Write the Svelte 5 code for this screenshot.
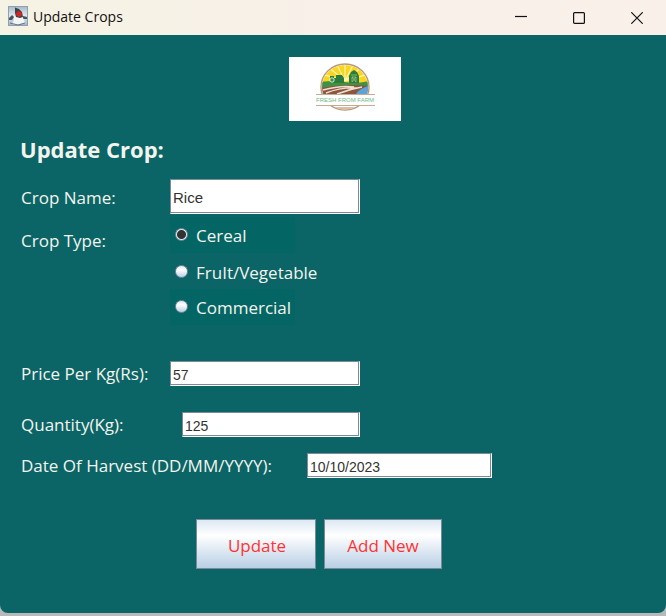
<script>
  let crop = $state({ name: 'Rice', type: 'Cereal', price: '57', quantity: '125', harvest: '10/10/2023' });
  const types = ['Cereal', 'FruIt/Vegetable', 'Commercial'];
</script>

<div class="window">
  <header>
    <svg class="app-icon" width="20" height="20" viewBox="0 0 20 20" aria-hidden="true">
      <defs>
        <linearGradient id="tile" x1="0" y1="0" x2="0" y2="1">
          <stop offset="0" stop-color="#a9b9c8" />
          <stop offset="0.5" stop-color="#e3eaf0" />
          <stop offset="1" stop-color="#9fb3c6" />
        </linearGradient>
      </defs>
      <rect x="0.5" y="0.5" width="19" height="19" fill="url(#tile)" stroke="#8fa0b0" />
      <path d="M1 12 4 9 6 11 4 14 1 14ZM15 10 19 11 19 13 15 13Z" fill="#4a525a" />
      <path d="M6 10 14 10 16 14 17 17 13 18 9 19 4 18 6 14Z" fill="#f3f5f6" />
      <path d="M7 1.5 11 3 14 6 15 11 12 12 8 11 7 7Z" fill="#3d434b" />
      <path d="M2 17 6 18 10 19 17 17" fill="none" stroke="#68747f" />
      <circle cx="11" cy="8" r="2.7" fill="#d92323" />
    </svg>
    <span class="title">Update Crops</span>
    <div class="controls">
      <button type="button" aria-label="Minimize">
        <svg width="12" height="12" viewBox="0 0 12 12"><path d="M0 4.5H12" /></svg>
      </button>
      <button type="button" aria-label="Maximize">
        <svg width="12" height="12" viewBox="0 0 12 12"><rect x="0.6" y="0.6" width="10.8" height="10.8" rx="1" /></svg>
      </button>
      <button type="button" aria-label="Close">
        <svg width="12" height="12" viewBox="0 0 12 12"><path d="M0.3 0.3 11.7 11.7M11.7 0.3 0.3 11.7" /></svg>
      </button>
    </div>
  </header>

  <main>
    <svg class="logo" width="112" height="64" viewBox="0 0 112 64" role="img" aria-label="Fresh from farm">
      <defs>
        <clipPath id="disc"><ellipse cx="56" cy="30" rx="23" ry="22" /></clipPath>
      </defs>
      <rect width="112" height="64" fill="#fff" />
      <ellipse cx="56" cy="30" rx="24" ry="23" fill="#fff" stroke="#b79a7c" stroke-width="1.4" />
      <g clip-path="url(#disc)">
        <rect x="32" y="6" width="48" height="22" fill="#fbd51e" />
        <path d="M56 24V6M56 24 47 6M56 24 65 6M56 24 38 9M56 24 74 9M56 24 33 17M56 24 79 17" stroke="#fff6b5" stroke-width="1.2" />
        <path d="M32 25Q45 23 56 25T80 24V31H32Z" fill="#3f9146" />
        <path d="M32 31Q55 26 80 29V38H32Z" fill="#8a5640" />
        <path d="M34 33Q52 28 65 30M37 36Q52 30 68 31M48 37Q61 32 73 30" fill="none" stroke="#f0dfcf" stroke-width="1.4" />
        <path d="M67 37Q70 32 79 29V37Z" fill="#5aa4dc" />
      </g>
      <path d="M41 26V19H45V21H47V18H53L55 21V26Z" fill="#2b7d3c" />
      <circle cx="43" cy="23" r="2.2" fill="#3f9146" stroke="#fff" stroke-width="0.8" />
      <path d="M60 26V19L62 15 65 13 68 15 70 19V26Z" fill="#2b7d3c" />
      <path d="M62 18H68M63 25V20H67V25M63 20 67 25M67 20 63 25" fill="none" stroke="#a9cc86" stroke-width="0.7" />
      <rect x="27" y="37" width="59" height="12" fill="#fff" />
      <path d="M27 37.5H86M27 48.5H86" stroke="#c7a994" />
      <path d="M46 50Q55 56 66 50" fill="#d9bfa8" />
      <text x="56" y="45" text-anchor="middle">FRESH FROM FARM</text>
    </svg>

    <h1>Update Crop:</h1>

    <form onsubmit={(e) => e.preventDefault()}>
      <div class="row name">
        <label for="name">Crop Name:</label>
        <input id="name" type="text" bind:value={crop.name} />
      </div>

      <div class="row types" role="radiogroup" aria-labelledby="type-label">
        <span id="type-label">Crop Type:</span>
        <div class="options">
          {#each types as type}
            <label><input type="radio" name="type" value={type} bind:group={crop.type} />{type}</label>
          {/each}
        </div>
      </div>

      <div class="row price">
        <label for="price">Price Per Kg(Rs):</label>
        <input id="price" type="text" bind:value={crop.price} />
      </div>
      <div class="row quantity">
        <label for="quantity">Quantity(Kg):</label>
        <input id="quantity" type="text" bind:value={crop.quantity} />
      </div>
      <div class="row harvest">
        <label for="harvest">Date Of Harvest (DD/MM/YYYY):</label>
        <input id="harvest" type="text" bind:value={crop.harvest} />
      </div>

      <div class="actions">
        <button class="update" type="submit">Update</button>
        <button class="add" type="button">Add New</button>
      </div>
    </form>
  </main>
</div>

<style>
  :global(body) {
    background: #b8baba;
  }

  .window {
    box-sizing: border-box;
    min-height: calc(100vh - 3px);
    overflow: hidden;
    border-radius: 0 0 8px 8px;
    background: #0b6566;
    color: #f4f4ee;
    font: 17px/24px 'Open Sans', 'Noto Sans', sans-serif;
  }

  header {
    display: flex;
    align-items: center;
    height: 35px;
    padding-left: 8px;
    background: linear-gradient(90deg, #f5f3e3, #f8f0e9 50%);
    color: #111;
  }

  .app-icon {
    margin-bottom: 4px;
  }

  .title {
    margin: 0 auto 2px 5px;
    font-size: 14px;
  }

  .controls {
    display: flex;
    height: 32px;
  }

  .controls button {
    display: grid;
    place-items: center;
    width: 58px;
    padding: 0;
    border: 0;
    background: none;
  }

  .controls svg {
    fill: none;
    stroke: #111;
    stroke-width: 1.2;
  }

  main {
    display: flex;
    flex-direction: column;
    padding: 22px 20px 40px;
  }

  .logo {
    align-self: center;
    margin-left: 24px;
  }

  .logo text {
    fill: #6dba83;
    font: 6px 'Liberation Sans', sans-serif;
  }

  h1 {
    margin: 12px 0 14px;
    font-size: 22px;
    line-height: 32px;
  }

  .row {
    display: flex;
    align-items: center;
    padding-left: 1px;
  }

  .row > :first-child {
    flex: 0 0 149px;
    white-space: nowrap;
  }

  input[type='text'] {
    box-sizing: border-box;
    width: 190px;
    height: 25px;
    padding: 2px 2px 0;
    border: 1px solid;
    border-color: #7a8a99 #fff #fff #7a8a99;
    border-radius: 0;
    outline: 0;
    background: #fff;
    box-shadow: inset -1px -1px #7a8a99;
    color: #333;
    font: 14px 'Liberation Sans', sans-serif;
  }

  .name label {
    padding-top: 3px;
  }

  .name input[type='text'] {
    height: 35px;
    font-size: 15px;
  }

  .types {
    align-items: flex-start;
    margin: 3px 0 36px;
  }

  .types > span {
    padding-top: 12px;
  }

  .options {
    display: grid;
    grid-auto-rows: 36px;
  }

  .options label {
    display: flex;
    align-items: center;
    gap: 8px;
    width: 125px;
    padding: 2px 0 0 5px;
    box-sizing: border-box;
    background: #036664;
    white-space: nowrap;
  }

  .options label:nth-child(2) {
    padding-top: 4px;
    background: none;
  }

  input[type='radio'] {
    appearance: none;
    flex: none;
    width: 13px;
    height: 13px;
    margin: 0 0 4px;
    border: 1px solid #7a8a99;
    border-radius: 50%;
    background: linear-gradient(#dde8f3, #fff 35%, #b8cfe5);
  }

  input[type='radio']:checked {
    background: radial-gradient(circle, #333 0 4px, #dde8f3 5px);
  }

  .quantity {
    margin: 26px 0 16px;
  }

  .row.quantity label {
    flex-basis: 161px;
  }

  .quantity input[type='text'] {
    width: 178px;
  }

  .row.harvest label {
    flex-basis: 286px;
  }

  .harvest input[type='text'] {
    width: 185px;
  }

  .actions {
    display: flex;
    gap: 8px;
    margin: 41px 0 0 176px;
  }

  .actions button {
    width: 120px;
    height: 50px;
    padding: 4px 0 0;
    border: 1px solid #7a8a99;
    border-radius: 0;
    background: linear-gradient(#dde8f3, #fff 32%, #b8cfe5);
    color: #ff3333;
    font: inherit;
  }

  .actions .update {
    padding-left: 2px;
  }

  .actions .add {
    width: 118px;
  }
</style>
